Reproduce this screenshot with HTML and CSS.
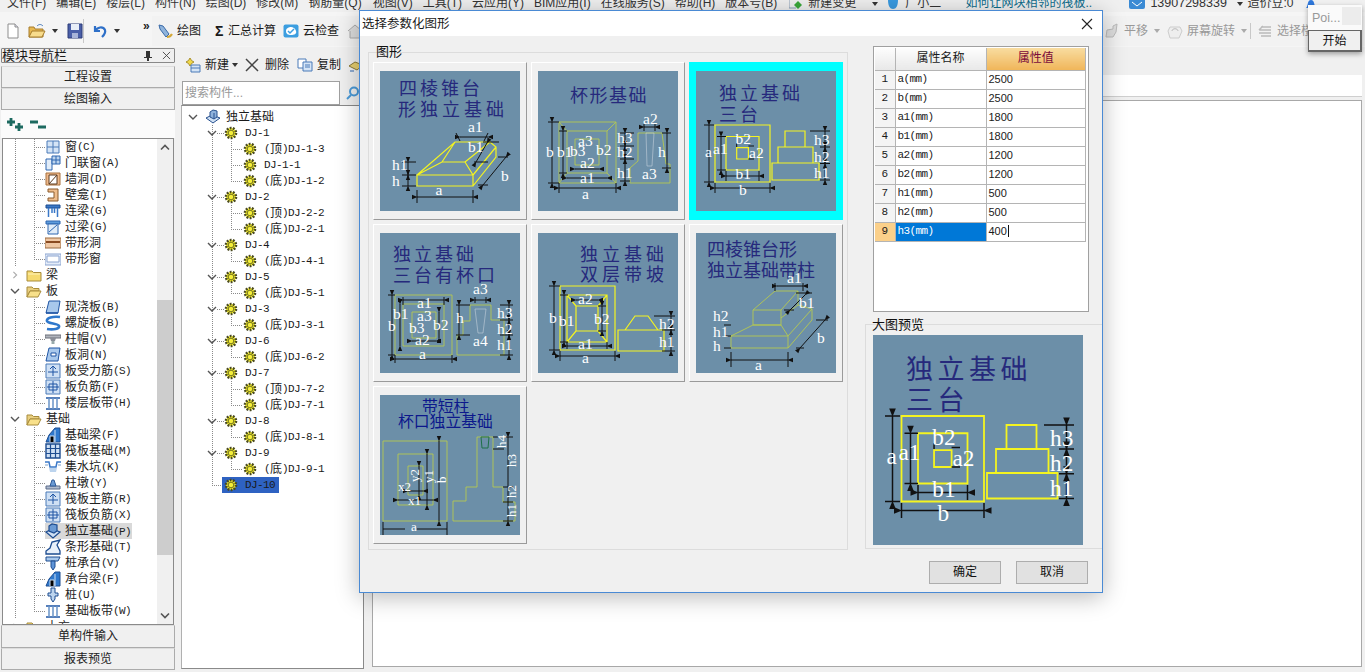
FILE: index.html
```html
<!DOCTYPE html>
<html lang="zh">
<head>
<meta charset="utf-8">
<title>选择参数化图形</title>
<link rel="stylesheet" href="styles.css">
</head>
<body>
<svg class="defs" aria-hidden="true">
  <defs>
    <marker id="ar" viewBox="0 0 6 6" refX="0.5" refY="3" markerWidth="6" markerHeight="6" markerUnits="userSpaceOnUse" orient="auto-start-reverse"><path d="M0 3L5.500 .8V5.200Z" fill="#111"/></marker>
    <symbol id="chev" viewBox="0 0 10 8"><path d="M1 2l4 4 4-4" fill="none" stroke="#555" stroke-width="1.400"/></symbol>
    <symbol id="chevr" viewBox="0 0 10 10"><path d="M3 1l4 4-4 4" fill="none" stroke="#aaa" stroke-width="1.400"/></symbol>
    <symbol id="gem" viewBox="0 0 14 14"><circle cx="7" cy="7" r="5" fill="#f2ec2a" stroke="#4a4a20" stroke-width="2.600" stroke-dasharray="1.800 1.300"/><circle cx="7" cy="7" r="2.800" fill="#f4ee3a" stroke="#55551c" stroke-width=".8"/></symbol>
    <symbol id="fold" viewBox="0 0 16 14"><path d="M1 3h5l1.500 1.500H15V13H1Z" fill="#f6da70" stroke="#a88c3c"/><path d="M2 6h12" stroke="#fff3bc"/></symbol>
    <symbol id="foldo" viewBox="0 0 16 14"><path d="M1 3h5l1.500 1.500H13V7H4L1 13Z" fill="#e9cf80" stroke="#a88c3c"/><path d="M4 7h11l-3 6H1Z" fill="#f8e08a" stroke="#a88c3c"/></symbol>
    <symbol id="found" viewBox="0 0 16 16"><path d="M1 9l6-3 8 3-7 5Z" fill="#cfe0f4" stroke="#28518f"/><path d="M5 3l3-2 4 1v6l-3 2-4-2Z" fill="#8fb2dc" stroke="#28518f"/><path d="M9 4v6" stroke="#28518f"/></symbol>
    <symbol id="i-win" viewBox="0 0 16 16"><path d="M2 2h12v12H2Z" fill="#d4e4f6" stroke="#4a7ab8"/><path d="M8 2v12M2 8h12" stroke="#4a7ab8"/></symbol>
    <symbol id="i-dw" viewBox="0 0 16 16"><path d="M1 4h6v11H1Z" fill="#e2edf9" stroke="#2f66b0"/><path d="M7 1h8v8H7Z" fill="#bcd4ee" stroke="#2f66b0"/><path d="M11 1v8M7 5h8" stroke="#2f66b0"/></symbol>
    <symbol id="i-hole" viewBox="0 0 16 16"><path d="M1 2h14v12H1Z" fill="#eeb98c" stroke="#a8703c"/><path d="M4 4h8v9H4Z" fill="#fff" stroke="#5a3a20"/><path d="M4 13l8-9" stroke="#5a3a20"/></symbol>
    <symbol id="i-nic" viewBox="0 0 16 16"><path d="M3 2h10v12H3V11h6V5H3Z" fill="#eebd8e" stroke="#8a5a2c"/></symbol>
    <symbol id="i-lb" viewBox="0 0 16 16"><path d="M1 2h14v3H1Z" fill="#3a78c8" stroke="#1d4c90"/><path d="M3.500 5v9M7 5v5M9.500 5v5M12.500 5v9" stroke="#3a78c8" stroke-width="1.500"/></symbol>
    <symbol id="i-gl" viewBox="0 0 16 16"><path d="M1 2h14v3H1Z" fill="#5e9cdc" stroke="#2f66b0"/><path d="M3 5h10v10H3Z" fill="#e0ecf8" stroke="#2f66b0"/><path d="M4 13l8-7" stroke="#2f66b0"/></symbol>
    <symbol id="i-bh" viewBox="0 0 16 16"><path d="M0 3h16v10H0Z" fill="#f0c8a4" stroke="#9a6a40"/><path d="M1 7h14" stroke="#8a4a20" stroke-width="2"/></symbol>
    <symbol id="i-bw" viewBox="0 0 16 16"><path d="M0 3h16v11H0Z" fill="#e4ecf8" stroke="#8ba4d0"/><path d="M2 5h12v6H2Z" fill="#fff" stroke="#8ba4d0"/></symbol>
    <symbol id="i-sl" viewBox="0 0 16 16"><path d="M4 2h11l-2 12H1Z" fill="#a8c8ec" stroke="#1f55a4"/><path d="M1 14h12" stroke="#1f55a4" stroke-width="1.500"/></symbol>
    <symbol id="i-sp" viewBox="0 0 16 16"><path d="M15 2C8 1 1 3 2 6s11 2 12 5-6 4-12 3" fill="none" stroke="#2f78cc" stroke-width="2.600"/></symbol>
    <symbol id="i-cap" viewBox="0 0 16 16"><path d="M0 4h16v3H0Z" fill="#b0b4bc" stroke="#6a6e78"/><path d="M5 7h6l-1 3H6Z" fill="#8a8e98"/><path d="M6.500 10h3v3h-3Z" fill="#9aa"/></symbol>
    <symbol id="i-sh" viewBox="0 0 16 16"><path d="M4 1h11l-2 13H1Z" fill="#a8c8ec" stroke="#1f55a4"/><path d="M6 6h5v3H6Z" fill="#fff" stroke="#1f55a4"/></symbol>
    <symbol id="i-rb" viewBox="0 0 16 16"><path d="M1 1h14v14H1Z" fill="#cfe0f4" stroke="#4a7ab8"/><path d="M8 3v10M3 9h10" stroke="#1f55a4"/><path d="M5 6l3-3 3 3" fill="none" stroke="#1f55a4"/></symbol>
    <symbol id="i-rn" viewBox="0 0 16 16"><path d="M1 1h14v14H1Z" fill="#cfe0f4" stroke="#4a7ab8"/><path d="M4 5h8v6H4ZM8 2v12M2 8h12" fill="none" stroke="#1f55a4"/></symbol>
    <symbol id="i-bd" viewBox="0 0 16 16"><path d="M1 3h14M1 14h14" stroke="#1f55a4" stroke-width="1.300"/><path d="M4 3v11M8 3v11M12 3v11" stroke="#6a94c8" stroke-width="1.500"/></symbol>
    <symbol id="i-fb" viewBox="0 0 16 16"><path d="M1 15l3-7 6-7h5v14Z" fill="#2f78cc" stroke="#1c4c90"/><path d="M5 15V9h4v6M10 3v12" stroke="#cfe0f4"/></symbol>
    <symbol id="i-raft" viewBox="0 0 16 16"><path d="M1 1h14v14H1Z" fill="#cfe0f4" stroke="#1d4c90" stroke-width="1.400"/><path d="M5.500 1v14M10.500 1v14M1 5.500h14M1 10.500h14" stroke="#1d4c90" stroke-width="1.200"/></symbol>
    <symbol id="i-pit" viewBox="0 0 16 16"><path d="M0 3h4l1 5h6l1-5h4" fill="none" stroke="#3a78c8" stroke-width="1.500"/><path d="M4 9h8l-1 4H5Z" fill="#bcd4ee"/><path d="M0 6h3M13 6h3" stroke="#7aa0cc"/></symbol>
    <symbol id="i-dun" viewBox="0 0 16 16"><path d="M1 11h14v3H1Z" fill="#b0bcd0" stroke="#5a6a88"/><path d="M5 11l2-6h2l2 6Z" fill="#6a9ad4" stroke="#2f5a98"/></symbol>
    <symbol id="i-zj" viewBox="0 0 16 16"><path d="M1 9l6-3 8 3-7 6Z" fill="#cfe0f4" stroke="#1d4c90" stroke-width="1.200"/><path d="M4 3l3-2 5 1v6l-3 2-5-2Z" fill="#6a9ad4" stroke="#1d4c90" stroke-width="1.200"/></symbol>
    <symbol id="i-tj" viewBox="0 0 16 16"><path d="M1 15v-3l4-3 2-6 8-2-3 5 3 6v3Z" fill="#e8f0fa" stroke="#1d4c90" stroke-width="1.300"/></symbol>
    <symbol id="i-ct" viewBox="0 0 16 16"><path d="M1 2h14l-2 4H1Z" fill="#a8c8ec" stroke="#1d4c90"/><path d="M6 6h4v6l-2 3-2-3Z" fill="#5e94d8" stroke="#1d4c90"/></symbol>
    <symbol id="i-pile" viewBox="0 0 16 16"><path d="M6 1h4v5h3v3h-3v3l-2 3-2-3V9H3V6h3Z" fill="#bcd4ee" stroke="#1d4c90"/></symbol>
    <symbol id="i-n" viewBox="0 0 16 16"><path d="M3 1h7l3 3v11H3Z" fill="#fff" stroke="#8d8d8d"/><path d="M10 1v3h3" fill="#dde" stroke="#8d8d8d"/></symbol>
  </defs>
</svg>

<div class="app">
  <div class="menubar">
    <span class="mi mi-a">文件(F)</span><span class="mi">编辑(E)</span><span class="mi">楼层(L)</span><span class="mi">构件(N)</span><span class="mi">绘图(D)</span><span class="mi">修改(M)</span><span class="mi">钢筋量(Q)</span><span class="mi mi-b">视图(V)</span><span class="mi">工具(T)</span><span class="mi">云应用(Y)</span><span class="mi mi-e">BIM应用(I)</span><span class="mi">在线服务(S)</span><span class="mi">帮助(H)</span><span class="mi">版本号(B)</span>
    <svg class="mi-ic mi-ic-new" viewBox="0 0 14 10"><path d="M0 0v8h7" fill="none" stroke="#8aa0b8"/><path d="M9 1l4 4-4 4-4-4Z" fill="#3aa83a"/></svg>
    <span class="mi mi-c">新建变更</span><span class="caret caret-top"></span>
    <svg class="mi-ic mi-ic-xe" viewBox="0 0 12 10"><path d="M1 0c0 6 2 9 5 9s5-3 5-9Z" fill="#3a9ae0"/></svg>
    <span class="mi mi-d">广小二</span><span class="mi mi-link">如何让网块相邻的筏板..</span>
    <svg class="mi-ic mi-ic-mail" viewBox="0 0 16 10"><rect x="0" y="-4" width="16" height="13" rx="2" fill="#3a8ad4"/><path d="M3 2l5 4 5-4" fill="none" stroke="#fff"/></svg>
    <span class="mi mi-phone">13907298339</span><span class="caret caret-top caret-ph"></span><span class="mi mi-bean">造价豆:0</span>
    <svg class="bell" viewBox="0 0 14 10"><path d="M2 8c2-1 1-8 5-8s3 7 5 8Z" fill="#2f78dc"/></svg>
  </div>

  <div class="toolbar">
    <div class="tb-left">
      <svg class="tb-i" viewBox="0 0 16 16"><use href="#i-n"/></svg>
      <svg class="tb-i tb-open" viewBox="0 0 18 16"><path d="M1 4h5l1 2h8v8H1Z" fill="#e8b850" stroke="#a67c2c"/><path d="M4 8h13l-3 6H1Z" fill="#f8dc8c" stroke="#a67c2c"/><path d="M9 3c2-2 4-2 6 0" fill="none" stroke="#4a7ab8"/></svg>
      <span class="caret"></span>
      <svg class="tb-i tb-save" viewBox="0 0 16 16"><path d="M1 1h14v14H1Z" fill="#4a5fa8" stroke="#2c3c78"/><path d="M4 1h8v6H4Z" fill="#e8eef8"/><path d="M5 10h6v5H5Z" fill="#a8b4d8"/></svg>
      <span class="tb-sep"></span>
      <svg class="tb-i tb-undo" viewBox="0 0 16 16"><path d="M3 3v5h5M3.500 8C5 4 11 3 13 7c1 3-1 5-3 7" fill="none" stroke="#2f70c8" stroke-width="2.200"/></svg>
      <span class="caret"></span>
      <span class="more">»</span>
    </div>
    <div class="tb-main">
      <svg class="tb-i" viewBox="0 0 16 16"><path d="M2 2l4 1 6 8-3 3-6-8Z" fill="#8fb4dc" stroke="#3a6aa8"/><path d="M10 14c2 0 4-1 5-3" fill="none" stroke="#d4a838" stroke-width="2"/></svg>
      <span class="tb-t">绘图</span>
      <span class="sigma">Σ</span>
      <span class="tb-t">汇总计算</span>
      <svg class="tb-i tb-cloud" viewBox="0 0 16 16"><rect x=".5" y="1.500" width="15" height="13" rx="2" fill="#3c9ee0"/><path d="M3 8c0-3 3-4 5-4s4 1 5 4-2 4-5 4-5-1-5-4Z" fill="#fff"/><path d="M5 8l2 2 4-4" fill="none" stroke="#3c9ee0" stroke-width="1.500"/></svg>
      <span class="tb-t">云检查</span>
      <svg class="tb-i tb-home" viewBox="0 0 16 16"><path d="M1 8l7-6 7 6M3 8v7h10V8" fill="#ddd" stroke="#aaa"/></svg>
      <div class="tb-right">
        <svg class="tb-i" viewBox="0 0 16 16"><path d="M2 14l1-7 6-1V3l4-2-1 8-3 5Z" fill="#ddd" stroke="#bbb"/></svg>
        <span class="tb-g tb-pan">平移</span><span class="caret caret-g caret-pan"></span>
        <svg class="tb-i tb-rot" viewBox="0 0 16 16"><path d="M3 4h10l2 4-3 7H3L1 8Z" fill="#eee" stroke="#ccc"/><path d="M5 8c0-3 6-3 6 0" fill="none" stroke="#bbb"/></svg>
        <span class="tb-g">屏幕旋转</span><span class="caret caret-g"></span>
        <span class="tb-sep tb-sep-g"></span>
        <svg class="tb-i" viewBox="0 0 16 16"><path d="M2 7h12M4 4h10M2 10h12M4 13h10M2 7l4-4" fill="none" stroke="#bbb" stroke-width="1.500"/></svg>
        <span class="tb-g">选择楼层</span>
      </div>
    </div>
  </div>

  <div class="main">
    <aside class="nav">
      <div class="nav-title"><span>模块导航栏</span><svg class="pin" viewBox="0 0 10 12"><path d="M3 1h4v6h2v1H6v3H4V8H1V7h2Z" fill="#333"/></svg><svg class="nav-x" viewBox="0 0 10 10"><path d="M1 1l8 8M9 1l-8 8" stroke="#444"/></svg></div>
      <div class="nav-btn nav-btn-first">工程设置</div>
      <div class="nav-btn">绘图输入</div>
      <div class="nav-tools">
        <svg class="nt" viewBox="0 0 16 14"><path d="M4 0v8M0 4h8M12 5v8M8 9h8" stroke="#1d6a60" stroke-width="2.800"/></svg>
        <svg class="nt" viewBox="0 0 16 14"><path d="M0 4h8M8 9h8" stroke="#1d6a60" stroke-width="2.800"/></svg>
      </div>
      <div class="nav-list">
        <div class="rows">
          <div class="nr c"><svg class="ni"><use href="#i-win"/></svg>窗<span class="m">(C)</span></div>
          <div class="nr c"><svg class="ni"><use href="#i-dw"/></svg>门联窗<span class="m">(A)</span></div>
          <div class="nr c"><svg class="ni"><use href="#i-hole"/></svg>墙洞<span class="m">(D)</span></div>
          <div class="nr c"><svg class="ni"><use href="#i-nic"/></svg>壁龛<span class="m">(I)</span></div>
          <div class="nr c"><svg class="ni"><use href="#i-lb"/></svg>连梁<span class="m">(G)</span></div>
          <div class="nr c"><svg class="ni"><use href="#i-gl"/></svg>过梁<span class="m">(G)</span></div>
          <div class="nr c"><svg class="ni"><use href="#i-bh"/></svg>带形洞</div>
          <div class="nr c last"><svg class="ni"><use href="#i-bw"/></svg>带形窗</div>
          <div class="nr s"><svg class="exp"><use href="#chevr"/></svg><svg class="fo"><use href="#fold"/></svg>梁</div>
          <div class="nr s"><svg class="exp"><use href="#chev"/></svg><svg class="fo"><use href="#foldo"/></svg>板</div>
          <div class="nr c"><svg class="ni"><use href="#i-sl"/></svg>现浇板<span class="m">(B)</span></div>
          <div class="nr c"><svg class="ni"><use href="#i-sp"/></svg>螺旋板<span class="m">(B)</span></div>
          <div class="nr c"><svg class="ni"><use href="#i-cap"/></svg>柱帽<span class="m">(V)</span></div>
          <div class="nr c"><svg class="ni"><use href="#i-sh"/></svg>板洞<span class="m">(N)</span></div>
          <div class="nr c"><svg class="ni"><use href="#i-rb"/></svg>板受力筋<span class="m">(S)</span></div>
          <div class="nr c"><svg class="ni"><use href="#i-rn"/></svg>板负筋<span class="m">(F)</span></div>
          <div class="nr c last"><svg class="ni"><use href="#i-bd"/></svg>楼层板带<span class="m">(H)</span></div>
          <div class="nr s"><svg class="exp"><use href="#chev"/></svg><svg class="fo"><use href="#foldo"/></svg>基础</div>
          <div class="nr c"><svg class="ni"><use href="#i-fb"/></svg>基础梁<span class="m">(F)</span></div>
          <div class="nr c"><svg class="ni"><use href="#i-raft"/></svg>筏板基础<span class="m">(M)</span></div>
          <div class="nr c"><svg class="ni"><use href="#i-pit"/></svg>集水坑<span class="m">(K)</span></div>
          <div class="nr c"><svg class="ni"><use href="#i-dun"/></svg>柱墩<span class="m">(Y)</span></div>
          <div class="nr c"><svg class="ni"><use href="#i-rb"/></svg>筏板主筋<span class="m">(R)</span></div>
          <div class="nr c"><svg class="ni"><use href="#i-rn"/></svg>筏板负筋<span class="m">(X)</span></div>
          <div class="nr c on"><svg class="ni"><use href="#i-zj"/></svg><span class="on-t">独立基础<span class="m">(P)</span></span></div>
          <div class="nr c"><svg class="ni"><use href="#i-tj"/></svg>条形基础<span class="m">(T)</span></div>
          <div class="nr c"><svg class="ni"><use href="#i-ct"/></svg>桩承台<span class="m">(V)</span></div>
          <div class="nr c"><svg class="ni"><use href="#i-fb"/></svg>承台梁<span class="m">(F)</span></div>
          <div class="nr c"><svg class="ni"><use href="#i-pile"/></svg>桩<span class="m">(U)</span></div>
          <div class="nr c last"><svg class="ni"><use href="#i-bd"/></svg>基础板带<span class="m">(W)</span></div>
          <div class="nr s"><svg class="exp"><use href="#chevr"/></svg><svg class="fo"><use href="#fold"/></svg>土方</div>
        </div>
        <div class="sb">
          <svg class="sb-a" viewBox="0 0 10 8"><path d="M1 6l4-4 4 4" fill="none" stroke="#555" stroke-width="1.600"/></svg>
          <div class="sb-track"><div class="sb-thumb"></div></div>
          <svg class="sb-a" viewBox="0 0 10 8"><path d="M1 2l4 4 4-4" fill="none" stroke="#555" stroke-width="1.600"/></svg>
        </div>
      </div>
      <div class="nav-btn nav-btn-b">单构件输入</div>
      <div class="nav-btn">报表预览</div>
    </aside>

    <section class="comp">
      <div class="comp-tb">
        <svg class="ct-i" viewBox="0 0 16 16"><path d="M5 1l1.500 2.500L9 5 6.500 6.500 5 9 3.500 6.500 1 5l2.500-1.500Z" fill="#f0d848" stroke="#a89030"/><path d="M6 8h9v7H6Z" fill="#d4e4f6" stroke="#4a7ab8"/><path d="M6 11h9" stroke="#4a7ab8"/></svg>
        <span class="ct-t">新建</span><span class="caret caret-new"></span>
        <svg class="ct-x" viewBox="0 0 14 14"><path d="M1 1l12 12M13 1L1 13" stroke="#444" stroke-width="1.500"/></svg>
        <span class="ct-t">删除</span>
        <svg class="ct-i ct-copy" viewBox="0 0 16 16"><path d="M1 2h8v9H1Z" fill="#fff" stroke="#4a7ab8"/><path d="M6 5h9v9H6Z" fill="#d4e4f6" stroke="#4a7ab8"/><path d="M8 8h5M8 10h5" stroke="#4a7ab8"/></svg>
        <span class="ct-t">复制</span>
        <svg class="ct-i ct-last" viewBox="0 0 16 16"><path d="M1 9l6-4 8 3-6 5Z" fill="#e8d070" stroke="#8a7a3a"/><path d="M2 14h4" stroke="#2f66b0"/></svg>
      </div>
      <div class="search">
        <div class="search-in">搜索构件...</div>
        <svg class="search-i" viewBox="0 0 14 14"><circle cx="8" cy="5.500" r="4" fill="none" stroke="#4a9ad8" stroke-width="2"/><path d="M5 9l-4 4" stroke="#4a9ad8" stroke-width="2"/></svg>
      </div>
      <div class="tree">
        <div class="tr l0"><svg class="exp"><use href="#chev"/></svg><svg class="troot"><use href="#found"/></svg>独立基础</div>
        <div class="tr l1"><svg class="exp"><use href="#chev"/></svg><svg class="g"><use href="#gem"/></svg><span class="m">DJ-1</span></div>
        <div class="tr l2"><svg class="g"><use href="#gem"/></svg><span class="m">(</span>顶<span class="m">)DJ-1-3</span></div>
        <div class="tr l2"><svg class="g"><use href="#gem"/></svg><span class="m">DJ-1-1</span></div>
        <div class="tr l2 e"><svg class="g"><use href="#gem"/></svg><span class="m">(</span>底<span class="m">)DJ-1-2</span></div>
        <div class="tr l1"><svg class="exp"><use href="#chev"/></svg><svg class="g"><use href="#gem"/></svg><span class="m">DJ-2</span></div>
        <div class="tr l2"><svg class="g"><use href="#gem"/></svg><span class="m">(</span>顶<span class="m">)DJ-2-2</span></div>
        <div class="tr l2 e"><svg class="g"><use href="#gem"/></svg><span class="m">(</span>底<span class="m">)DJ-2-1</span></div>
        <div class="tr l1"><svg class="exp"><use href="#chev"/></svg><svg class="g"><use href="#gem"/></svg><span class="m">DJ-4</span></div>
        <div class="tr l2 e"><svg class="g"><use href="#gem"/></svg><span class="m">(</span>底<span class="m">)DJ-4-1</span></div>
        <div class="tr l1"><svg class="exp"><use href="#chev"/></svg><svg class="g"><use href="#gem"/></svg><span class="m">DJ-5</span></div>
        <div class="tr l2 e"><svg class="g"><use href="#gem"/></svg><span class="m">(</span>底<span class="m">)DJ-5-1</span></div>
        <div class="tr l1"><svg class="exp"><use href="#chev"/></svg><svg class="g"><use href="#gem"/></svg><span class="m">DJ-3</span></div>
        <div class="tr l2 e"><svg class="g"><use href="#gem"/></svg><span class="m">(</span>底<span class="m">)DJ-3-1</span></div>
        <div class="tr l1"><svg class="exp"><use href="#chev"/></svg><svg class="g"><use href="#gem"/></svg><span class="m">DJ-6</span></div>
        <div class="tr l2 e"><svg class="g"><use href="#gem"/></svg><span class="m">(</span>底<span class="m">)DJ-6-2</span></div>
        <div class="tr l1"><svg class="exp"><use href="#chev"/></svg><svg class="g"><use href="#gem"/></svg><span class="m">DJ-7</span></div>
        <div class="tr l2"><svg class="g"><use href="#gem"/></svg><span class="m">(</span>顶<span class="m">)DJ-7-2</span></div>
        <div class="tr l2 e"><svg class="g"><use href="#gem"/></svg><span class="m">(</span>底<span class="m">)DJ-7-1</span></div>
        <div class="tr l1"><svg class="exp"><use href="#chev"/></svg><svg class="g"><use href="#gem"/></svg><span class="m">DJ-8</span></div>
        <div class="tr l2 e"><svg class="g"><use href="#gem"/></svg><span class="m">(</span>底<span class="m">)DJ-8-1</span></div>
        <div class="tr l1"><svg class="exp"><use href="#chev"/></svg><svg class="g"><use href="#gem"/></svg><span class="m">DJ-9</span></div>
        <div class="tr l2 e"><svg class="g"><use href="#gem"/></svg><span class="m">(</span>底<span class="m">)DJ-9-1</span></div>
        <div class="tr l1 end"><span class="sel"><svg class="g"><use href="#gem"/></svg><span class="m">DJ-10</span></span></div>
      </div>
    </section>

    <section class="work">
      <div class="work-strip"></div>
      <div class="work-tabs"></div>
      <div class="canvas"></div>
    </section>
  </div>
</div>

<div class="dialog">
  <div class="d-title"><span>选择参数化图形</span><svg class="d-x" viewBox="0 0 12 12"><path d="M1 1l10 10M11 1L1 11" stroke="#222" stroke-width="1.100"/></svg></div>
  <div class="d-body">
    <div class="group">
      <div class="g-label">图形</div>
      <div class="cards">
        <div class="card">
          <svg class="th" viewBox="0 0 140 140">
            <text class="t" x="19" y="24" letter-spacing="3">四棱锥台</text><text class="t" x="18" y="45" letter-spacing="4">形独立基础</text>
            <path class="y" d="M37 104H93V115H37ZM37 104L75 71H110L116 76V86L93 115M37 104L62 91H85L93 104M62 91L75 71M85 91L110 71M93 104L116 76"/>
            <g class="d"><path d="M37 126H93"/><path d="M28 91V104"/><path d="M28 104V115"/><path d="M80 66H108"/><path d="M107 72L96 91"/><path d="M126 86L103 114"/></g>
            <path class="k" d="M37 119V132M93 119V132M22 91H36M22 104H36M22 115H36M76 62L80 70M108 62L104 70M103 71H119M94 91H108M118 86H128M98 114H108"/>
            <text class="w" x="59" y="124" text-anchor="middle">a</text><text class="w" x="12" y="99">h1</text><text class="w" x="12" y="115">h</text><text class="w" x="88" y="61">a1</text><text class="w" x="88" y="81">b1</text><text class="w" x="121" y="110">b</text>
          </svg>
        </div>
        <div class="card">
          <svg class="th" viewBox="0 0 140 140">
            <text class="t" x="32" y="31" letter-spacing="1.500">杯形基础</text>
            <path class="p" d="M21 51H78V112H21ZM29 60H69V102H29ZM37 68H61V94H37ZM21 51L29 60M78 51L69 60M21 112L29 102M78 112L69 102M100 62H124L128 93H132V112H92V97L100 90Z"/>
            <path class="p2" d="M108 62H116L114 95H109Z"/>
            <g class="d"><path d="M14 51V112"/><path d="M25 60V102"/><path d="M21 117H78"/><path d="M29 107H69"/><path d="M37 98H61"/><path d="M87 62V75"/><path d="M87 75V88"/><path d="M87 88V110"/><path d="M129 62V97"/><path d="M106 56H117"/></g>
            <path class="k" d="M10 51H21M10 112H21M21 60H29M21 102H29M21 112V122M78 112V122M82 62H96M82 75H96M82 88H96M82 110H92M124 62H133M124 97H133M106 53V60M117 53V60"/>
            <text class="w" x="105" y="53">a2</text><text class="w" x="79" y="72">h3</text><text class="w" x="79" y="86">h2</text><text class="w" x="79" y="107">h1</text><text class="w" x="120" y="86">h</text><text class="w" x="104" y="108">a3</text><text class="w" x="44" y="128">a</text><text class="w" x="42" y="112">a1</text><text class="w" x="42" y="97">a2</text><text class="w" x="40" y="75">a3</text><text class="w" x="8" y="86">b</text><text class="w" x="19" y="86">b1</text><text class="w" x="32" y="85">b3</text><text class="w" x="58" y="84">b2</text>
          </svg>
        </div>
        <div class="card card-on">
          <svg class="th" viewBox="0 0 140 140">
            <text class="t" x="23" y="29" letter-spacing="3">独立基础</text><text class="t" x="23" y="50" letter-spacing="3">三台</text>
            <path class="y" d="M19 54H74V111H19ZM30 65.500H63V99H30ZM40.700 76.700H52.400V88H40.700ZM89 60H109V76H89ZM82 76H117V92H82ZM76 92H123V109H76Z"/>
            <g class="d"><path d="M13 54V111"/><path d="M25 65.500V99"/><path d="M19 117H74"/><path d="M30 105H63"/><path d="M129 60V76"/><path d="M129 76V92.500"/><path d="M129 92.500V109"/></g>
            <path class="k" d="M8 54H18M8 111H18M21 65.500H30M21 99H30M19 112V122M74 112V122M30 100V110M63 100V110M114 60H134M124 76H134M124 92.500H134M124 109H134M40.700 72V76M52.400 75H58M52.400 88H58"/>
            <text class="w" x="9" y="86">a</text><text class="w" x="17" y="83">a1</text><text class="w" x="39.500" y="73">b2</text><text class="w" x="53" y="87">a2</text><text class="w" x="39.500" y="108">b1</text><text class="w" x="43" y="124">b</text><text class="w" x="118" y="74">h3</text><text class="w" x="118" y="90.500">h2</text><text class="w" x="118" y="107">h1</text>
          </svg>
        </div>
        <div class="card">
          <svg class="th" viewBox="0 0 140 140">
            <text class="t" x="13" y="28" letter-spacing="3">独立基础</text><text class="t" x="13" y="49" letter-spacing="3">三台有杯口</text>
            <path class="p" d="M15 62H72V122H15ZM23 71H64V113H23ZM32 79H56V105H32ZM90 72H111V87H124V122H77V102H83V88H90Z"/>
            <path class="p2" d="M95 76H106L103 100H98Z"/>
            <g class="d"><path d="M12 62V122"/><path d="M20 71V113"/><path d="M59 79V105"/><path d="M23 67H64"/><path d="M32 108H56"/><path d="M15 126H72"/><path d="M95 67H106"/><path d="M79 72V102"/><path d="M129 72V87"/><path d="M129 87V102"/><path d="M129 102V122"/></g>
            <path class="k" d="M8 62H15M8 122H15M23 64V72M64 64V72M15 122V130M72 122V130M95 64V70M106 64V70M76 72H90M76 102H90M120 72H133M120 87H133M120 102H133M120 122H133"/>
            <text class="w" x="93" y="61">a3</text><text class="w" x="37" y="75">a1</text><text class="w" x="13" y="86">b1</text><text class="w" x="37" y="88">a3</text><text class="w" x="76" y="90">h</text><text class="w" x="117" y="85">h3</text><text class="w" x="117" y="101">h2</text><text class="w" x="117" y="117">h1</text><text class="w" x="53" y="97">b2</text><text class="w" x="29" y="100">b3</text><text class="w" x="8" y="98">b</text><text class="w" x="35" y="112">a2</text><text class="w" x="93" y="113">a4</text><text class="w" x="39" y="126">a</text>
          </svg>
        </div>
        <div class="card">
          <svg class="th" viewBox="0 0 140 140">
            <text class="t" x="42" y="28" letter-spacing="4">独立基础</text><text class="t" x="42" y="48" letter-spacing="4">双层带坡</text>
            <path class="y" d="M22 53H77V117H22ZM29 62H69V109H29ZM38 73H60V98H38ZM29 62L38 73M69 62L60 73M29 109L38 98M69 109L60 98M80 97H126V118H80ZM87 97L97 83H110L120 97"/>
            <g class="d"><path d="M16 53V117"/><path d="M26 62V109"/><path d="M64 73V98"/><path d="M38 67H60"/><path d="M29 113H69"/><path d="M22 123H77"/><path d="M133 83V97"/><path d="M133 97V118"/></g>
            <path class="k" d="M11 53H22M11 117H22M22 62H30M22 109H30M60 73H68M60 98H68M22 118V128M77 118V128M116 83H137M124 97H137M124 118H137M29 109V116M69 109V116"/>
            <text class="w" x="11" y="90">b</text><text class="w" x="21" y="93">b1</text><text class="w" x="40" y="71">a2</text><text class="w" x="56" y="91">b2</text><text class="w" x="40" y="116">a1</text><text class="w" x="44" y="130">a</text><text class="w" x="121" y="96">h2</text><text class="w" x="121" y="114">h1</text>
          </svg>
        </div>
        <div class="card">
          <svg class="th" viewBox="0 0 140 140">
            <text class="t" x="11" y="23">四棱锥台形</text><text class="t" x="11" y="44">独立基础带柱</text>
            <path class="p" d="M35 103H92V115H35ZM35 103L57 92H85L92 103M57 77H85V92H57ZM57 77L79 58H102L85 77M102 58V72L116 76V87L92 115M92 103L116 76M85 85L102 72"/>
            <g class="d"><path d="M35 127H92"/><path d="M81 53H107"/><path d="M109 62L94 77"/><path d="M129 87L104 115"/></g>
            <path class="k" d="M35 119V134M92 119V134M79 50V58M107 50V58M100 60H116M88 77H98M120 87H132M100 115H108M28 103H35M28 115H35M28 92H35"/>
            <text class="w" x="91" y="50">a1</text><text class="w" x="103" y="75">b1</text><text class="w" x="17" y="88">h2</text><text class="w" x="17" y="104">h1</text><text class="w" x="17" y="118">h</text><text class="w" x="121" y="110">b</text><text class="w" x="59" y="137">a</text>
          </svg>
        </div>
        <div class="card">
          <svg class="th" viewBox="0 0 140 140">
            <text class="t2" x="42" y="17">带短柱</text><text class="t2" x="18" y="32">杯口独立基础</text>
            <path class="p" d="M3 46H67V126H3ZM18 59H53V110H18ZM28 71H43V100H28ZM97 42H113V92H123V107H135V126H73V106H86V92H97Z"/>
            <path class="gc" d="M101 42H109L108 53H102Z"/>
            <g class="d"><path d="M59 46V126"/><path d="M47 59V110"/><path d="M39 71V100"/><path d="M18 105H53"/><path d="M28 96H43"/><path d="M128 42V126"/></g>
            <path class="k" d="M3 134H25M37 134H67M3 127V140M67 127V140M113 42H133M113 54H124M123 92H133M123 107H133M123 126H133"/>
            <text class="w2" x="31" y="136">a</text><text class="w2" x="28" y="110">x1</text><text class="w2" x="18" y="96">x2</text>
            <text class="w2" x="66" y="88" transform="rotate(-90 66 88)">b</text>
            <text class="w2" x="53" y="88" transform="rotate(-90 53 88)">y1</text>
            <text class="w2" x="39" y="87" transform="rotate(-90 39 87)">y2</text>
            <text class="w2" x="126" y="53" transform="rotate(-90 126 53)">h4</text>
            <text class="w2" x="136" y="72" transform="rotate(-90 136 72)">h3</text>
            <text class="w2" x="136" y="103" transform="rotate(-90 136 103)">h2</text>
            <text class="w2" x="136" y="122" transform="rotate(-90 136 122)">h1</text>
          </svg>
        </div>
      </div>
    </div>

    <div class="side">
      <div class="grid-box">
        <table class="props">
          <thead><tr><th class="c0"></th><th class="c1">属性名称</th><th class="c2 val-h">属性值</th></tr></thead>
          <tbody>
            <tr><th>1</th><td class="m-c">a(mm)</td><td class="v">2500</td></tr>
            <tr><th>2</th><td class="m-c">b(mm)</td><td class="v">2500</td></tr>
            <tr><th>3</th><td class="m-c">a1(mm)</td><td class="v">1800</td></tr>
            <tr><th>4</th><td class="m-c">b1(mm)</td><td class="v">1800</td></tr>
            <tr><th>5</th><td class="m-c">a2(mm)</td><td class="v">1200</td></tr>
            <tr><th>6</th><td class="m-c">b2(mm)</td><td class="v">1200</td></tr>
            <tr><th>7</th><td class="m-c">h1(mm)</td><td class="v">500</td></tr>
            <tr><th>8</th><td class="m-c">h2(mm)</td><td class="v">500</td></tr>
            <tr class="act"><th>9</th><td class="m-c">h3(mm)</td><td class="v"><span class="cursor">400</span></td></tr>
          </tbody>
        </table>
      </div>
      <div class="preview">
        <div class="g-label g-label-p">大图预览</div>
        <svg class="big" viewBox="0 0 140 140">
          <text class="t" x="22" y="29" letter-spacing="3">独立基础</text><text class="t" x="22" y="50" letter-spacing="3">三台</text>
          <path class="y" d="M19 54H74V111H19ZM30 65.500H63V99H30ZM40.700 76.700H52.400V88H40.700ZM89 60H109V76H89ZM82 76H117V92H82ZM76 92H123V109H76Z"/>
          <g class="d"><path d="M13 54V111"/><path d="M25 65.500V99"/><path d="M19 117H74"/><path d="M30 105H63"/><path d="M129 60V76"/><path d="M129 76V92.500"/><path d="M129 92.500V109"/></g>
          <path class="k" d="M8 54H18M8 111H18M21 65.500H30M21 99H30M19 112V122M74 112V122M30 100V110M63 100V110M114 60H134M124 76H134M124 92.500H134M124 109H134M40.700 72V76M52.400 75H58M52.400 88H58"/>
          <text class="w" x="9" y="86">a</text><text class="w" x="17" y="83">a1</text><text class="w" x="39.500" y="73">b2</text><text class="w" x="53" y="87">a2</text><text class="w" x="39.500" y="108">b1</text><text class="w" x="43" y="124">b</text><text class="w" x="118" y="74">h3</text><text class="w" x="118" y="90.500">h2</text><text class="w" x="118" y="107">h1</text>
        </svg>
      </div>
    </div>
  </div>
  <div class="d-foot"><div class="btn">确定</div><div class="btn">取消</div></div>
</div>

<div class="popup">
  <div class="pop-top"><span>Poi...</span><i class="pop-box"></i></div>
  <div class="pop-btn">开始</div>
</div>
</body>
</html>
```
FILE: styles.css
```css
* { box-sizing: border-box; }
html, body { margin: 0; padding: 0; }
body {
  width: 1365px; height: 672px; overflow: hidden; position: relative;
  background: #f0f0f0; color: #1a1a1a;
  font: 12px/16px "Liberation Sans", "Noto Sans CJK SC", sans-serif;
}
.defs { position: absolute; width: 0; height: 0; }
.m { font: 11px/16px "Liberation Mono", monospace; letter-spacing: -.6px; }

/* shell */
.app { display: flex; flex-direction: column; height: 672px; }
.menubar { height: 12px; line-height: 6px; display: flex; padding-left: 7px; gap: 10px; overflow: hidden; white-space: nowrap; flex: none; color: #333; }
.mi-b { margin-left: 1px; }
.mi-ic { height: 10px; flex: none; }
.mi-e { margin-left: 0; }
.mi-ic-new { width: 14px; margin-left: 2px; }
.mi-c { margin-left: -5px; margin-right: 0; }
.caret-top { align-self: flex-start; }
.mi-ic-xe { width: 12px; margin-left: -9px; }
.mi-d { margin-left: -4px; }
.mi-link { margin-left: 14px; color: #0d6d8c; width: 128px; }
.mi-ic-mail { width: 16px; margin-left: 26px; margin-right: -6px; }
.mi-phone { width: 77px; font-size: 12.500px; margin-left: 1px; }
.mi-bean { margin-left: -6px; }
.bell { width: 14px; height: 10px; margin-left: 1px; }

.toolbar { height: 35px; display: flex; flex: none; align-items: center; background: #f5f5f5; padding-top: 3px; }
.tb-left { display: flex; align-items: center; width: 152px; height: 30px; padding-left: 5px; flex: none; }
.tb-main { display: flex; align-items: center; flex: 1; height: 30px; padding-left: 5px; background: #f2f2f2; }
.tb-i { width: 16px; height: 16px; flex: none; }
.tb-open { width: 18px; margin-left: 7px; }
.tb-save { margin-left: 1px; }
.tb-undo { margin-left: 0; }
.tb-t { margin-left: 4px; }
.caret { width: 0; height: 0; border: 3px solid transparent; border-top: 4px solid #333; border-bottom: 0; margin: 0 8px 0 6px; flex: none; }
.caret.caret-top { margin: 2px 8px 0 6px; }
.caret.caret-ph { margin: 2px 0 0 0; }
.caret-g { border-top-color: #aaa; }
.caret-pan { margin: 0 7px 0 6px; }
.caret-new { margin: 0 7px 0 3px; }
.tb-sep { width: 1px; height: 24px; background: #c8c8c8; margin: 0 8px 0 0; }
.tb-sep-g { height: 16px; margin: 0 6px 0 -5px; }
.more { margin: -10px 0 0 15px; font-size: 12px; font-weight: bold; color: #222; }
.sigma { margin-left: 14px; font-size: 14px; font-weight: bold; width: 9px; }
.sigma + .tb-t { margin-left: 4px; }
.tb-cloud { margin-left: 7px; }
.tb-home { margin-left: 8px; }
.tb-right { display: flex; align-items: center; margin-left: 741px; white-space: nowrap; }
.tb-g { color: #999; margin-left: 4px; }
.tb-pan { margin-left: 4px; }
.tb-rot { margin-left: 0; }

.main { flex: 1; display: flex; min-height: 0; padding-bottom: 1px; align-items: stretch; }

/* module navigator */
.nav { width: 176px; flex: none; display: flex; flex-direction: column; padding: 1px 1px 1px 1px; }
.nav-title { height: 15px; border: 1px solid #888; border-radius: 1px; display: flex; align-items: center; font-size: 13px; background: #efefef; flex: none; }
.nav-title span { flex: 1; }
.pin { width: 10px; height: 12px; margin-right: 9px; }
.nav-x { width: 9px; height: 9px; margin-right: 3px; }
.nav-btn { height: 22px; flex: none; border: 1px solid #ababab; border-top-color: #ddd; background: #f0f0f0; text-align: center; line-height: 21px; color: #222; }
.nav-btn-first { margin-top: 3px; }
.nav-btn-b { height: 23px; }
.nav-tools { height: 28px; flex: none; background: #fbfbfb; display: flex; align-items: center; padding: 2px 0 0 6px; gap: 7px; }
.nt { width: 16px; height: 14px; }
.nav-list { flex: 1; min-height: 0; margin: 0 1px 0 1px; border: 1px solid #8a8a8a; background: #fff; display: flex; overflow: hidden; }
.rows { flex: 1; min-width: 0; overflow: hidden; }
.nr { height: 16px; display: flex; align-items: center; white-space: nowrap; color: #222; --d: #8a8a8a; }
.nr.c {
  padding-left: 42px;
  background:
    repeating-linear-gradient(to bottom, var(--d) 0 1px, transparent 1px 2px) 12px 0 / 1px 100% no-repeat,
    repeating-linear-gradient(to bottom, var(--d) 0 1px, transparent 1px 2px) 31px 0 / 1px 100% no-repeat,
    repeating-linear-gradient(to right, var(--d) 0 1px, transparent 1px 2px) 31px 8px / 11px 1px no-repeat;
}
.nr.c.last {
  background:
    repeating-linear-gradient(to bottom, var(--d) 0 1px, transparent 1px 2px) 12px 0 / 1px 100% no-repeat,
    repeating-linear-gradient(to bottom, var(--d) 0 1px, transparent 1px 2px) 31px 0 / 1px 8px no-repeat,
    repeating-linear-gradient(to right, var(--d) 0 1px, transparent 1px 2px) 31px 8px / 11px 1px no-repeat;
}
.nr.s { padding-left: 7px; }
.exp { width: 10px; height: 8px; flex: none; }
.fo { width: 16px; height: 14px; margin: 0 4px 0 6px; flex: none; }
.ni { width: 16px; height: 16px; margin-right: 4px; flex: none; }
.on-t { background: #d9d9d9; width: 71px; margin-left: -4px; padding-left: 4px; height: 16px; }
.nr.on .ni { background: #d9d9d9; }
.sb { width: 16px; flex: none; display: flex; flex-direction: column; background: #f0f0f0; }
.sb-a { width: 16px; height: 17px; flex: none; padding: 4px 3px; }
.sb-track { flex: 1; padding-top: 144px; }
.sb-thumb { height: 255px; background: #cdcdcd; }

/* component tree */
.comp { width: 183px; flex: none; margin: 2px 0 2px 5px; display: flex; flex-direction: column; }
.comp-tb { height: 31px; flex: none; display: flex; align-items: center; padding-left: 4px; overflow: hidden; white-space: nowrap; }
.ct-i { width: 16px; height: 16px; flex: none; }
.ct-t { margin-left: 4px; }
.ct-x { width: 14px; height: 14px; flex: none; margin: 0 2px 0 0; }
.ct-copy { margin-left: 8px; }
.ct-last { margin-left: 7px; }
.search { height: 25px; flex: none; display: flex; align-items: center; }
.search-in { width: 158px; margin-left: 1px; height: 24px; border: 1px solid #a0a0a0; background: #fff; color: #999; padding-left: 2px; line-height: 22px; }
.search-i { width: 14px; height: 14px; margin-left: 6px; }
.tree { flex: 1; min-height: 0; border: 1px solid #8a8a8a; border-left-color: #b0b0b0; background: #fff; padding-top: 3px; overflow: hidden; }
.tr { height: 16px; display: flex; align-items: center; white-space: nowrap; --d: #8a8a8a; }
.tr .m { line-height: 16px; }
.l0 { padding-left: 6px; }
.troot { width: 16px; height: 16px; margin: 0 5px 0 7px; flex: none; }
.g { width: 14px; height: 14px; flex: none; margin-right: 7px; }
.l1 .exp { margin-right: 7px; }
.l1 {
  padding-left: 25px;
  background:
    repeating-linear-gradient(to bottom, var(--d) 0 1px, transparent 1px 2px) 30px 0 / 1px 100% no-repeat,
    repeating-linear-gradient(to right, var(--d) 0 1px, transparent 1px 2px) 35px 8px / 7px 1px no-repeat;
}
.l2 {
  padding-left: 61px;
  background:
    repeating-linear-gradient(to bottom, var(--d) 0 1px, transparent 1px 2px) 30px 0 / 1px 100% no-repeat,
    repeating-linear-gradient(to bottom, var(--d) 0 1px, transparent 1px 2px) 49px 0 / 1px 100% no-repeat,
    repeating-linear-gradient(to right, var(--d) 0 1px, transparent 1px 2px) 49px 8px / 12px 1px no-repeat;
}
.l2.e {
  background:
    repeating-linear-gradient(to bottom, var(--d) 0 1px, transparent 1px 2px) 30px 0 / 1px 100% no-repeat,
    repeating-linear-gradient(to bottom, var(--d) 0 1px, transparent 1px 2px) 49px 0 / 1px 8px no-repeat,
    repeating-linear-gradient(to right, var(--d) 0 1px, transparent 1px 2px) 49px 8px / 12px 1px no-repeat;
}
.l1.end {
  padding-left: 40px;
  background:
    repeating-linear-gradient(to bottom, var(--d) 0 1px, transparent 1px 2px) 30px 0 / 1px 8px no-repeat,
    repeating-linear-gradient(to right, var(--d) 0 1px, transparent 1px 2px) 30px 8px / 10px 1px no-repeat;
}
.sel { background: #2e62c2; width: 57px; height: 16px; display: flex; align-items: center; padding-left: 2px; }

/* work area */
.work { flex: 1; display: flex; flex-direction: column; margin-left: 8px; margin-right: 3px; min-width: 0; }
.work-strip { height: 28px; flex: none; }
.work-tabs { height: 22px; flex: none; background: #fff; border-bottom: 1px solid #cfcfcf; }
.canvas { flex: 1; margin-top: 3px; margin-bottom: 4px; background: #fff; border: 1px solid #a8a8a8; }

/* dialog */
.dialog {
  position: absolute; left: 359px; top: 10px; width: 744px; height: 583px;
  background: #f0f0f0; border: 1px solid #4a8ad4;
  box-shadow: 0 4px 22px rgba(0,0,0,.28);
  display: flex; flex-direction: column;
}
.d-title { height: 25px; background: #fff; flex: none; display: flex; align-items: center; justify-content: space-between; padding: 0 9px 0 2px; font-size: 12.500px; }
.d-x { width: 12px; height: 12px; margin-top: 0; }
.d-body { display: flex; padding: 16px 0 0 8px; flex: none; }
.group { width: 480px; height: 498px; border: 1px solid #dcdcdc; padding: 0 0 0 4px; flex: none; }
.g-label { height: 14px; line-height: 14px; margin: -8px 0 3px 3px; font-size: 13px; color: #111; width: fit-content; }
.cards { display: grid; grid-template-columns: repeat(3, 154px); grid-auto-rows: 158px; gap: 4px; }
.card { background: #f0f0f0; border: 1px solid; border-color: #fff #9a9a9a #9a9a9a #fff; padding: 8px 0 0 6px; }
.card-on { background: #00ffff; border-color: #00ffff; }
.th { display: block; width: 140px; height: 140px; background: #6c8fa8; }
.big { display: block; width: 210px; height: 210px; background: #6c8fa8; }
.t { font: 18px "Noto Sans CJK SC", sans-serif; fill: #26297c; }
.t2 { font: 15.800px "Noto Sans CJK SC", sans-serif; fill: #0c188c; }
.w { font: 15.500px "Liberation Serif", serif; fill: #fff; }
.w2 { font: 13px "Liberation Serif", serif; fill: #fff; }
.y { fill: none; stroke: #f4f420; stroke-width: 1.200; }
.p { fill: none; stroke: #b6c850; stroke-width: .9; }
.p2 { fill: none; stroke: #c4d0dc; stroke-width: .6; }
.gc { fill: none; stroke: #1e7048; stroke-width: 1; }
.d { fill: none; stroke: #111; stroke-width: 1; marker-start: url(#ar); marker-end: url(#ar); }
.k { fill: none; stroke: #111; stroke-width: 1; }

.side { width: 237px; margin-left: 17px; flex: none; }
.grid-box { margin: -6px 0 0 8px; width: 216px; height: 266px; border: 1px solid #a0a0a0; background: #fff; padding: 1px 0 0 1px; }
.props { border-collapse: collapse; table-layout: fixed; width: 211px; }
.props th, .props td { height: 19px; padding: 0 0 1px; border: 1px solid #b4b4b4; font-weight: normal; line-height: 16px; white-space: nowrap; overflow: hidden; }
.props thead th { height: 22px; background: linear-gradient(#fdfdfd, #e8e8e8); text-align: center; border-top: 0; border-left: 0; }
.c0 { width: 20px; }
.c1 { width: 91px; }
.props .val-h { background: linear-gradient(#f8dca0, #f0b65a); color: #7a0a3a; border-right: 1px solid #b4b4b4; }
.props tbody th { background: #f4f4f4; text-align: center; border-left: 0; font: 11px/16px "Liberation Mono", monospace; }
.m-c { font: 11px/16px "Liberation Mono", monospace; letter-spacing: -.6px; padding-left: 2px !important; }
.v { padding-left: 2px !important; font: 11px/16px "Liberation Sans", sans-serif; }
.act th { background: #fbd08a !important; }
.act .m-c { background: #0078d7; color: #fff; }
.cursor { border-right: 1px solid #111; padding-right: 1px; }
.preview { margin-top: 12px; height: 225px; border-top: 1px solid #dcdcdc; border-left: 1px solid #dcdcdc; border-bottom: 1px solid #dcdcdc; padding-left: 7px; }
.g-label-p { margin: -7px 0 3px -1px; }
.d-foot { display: flex; justify-content: flex-end; gap: 15px; padding: 11px 14px 0 0; }
.btn { width: 72px; height: 23px; background: #e1e1e1; border: 1px solid #adadad; text-align: center; line-height: 21px; color: #111; }

/* floating popup */
.popup { position: absolute; left: 1308px; top: 5px; width: 54px; box-shadow: 0 2px 5px rgba(0,0,0,.35); }
.pop-top { height: 25px; background: #fafafa; display: flex; align-items: center; padding-left: 4px; color: #999; font-size: 12.500px; justify-content: space-between; }
.pop-box { width: 19px; height: 18px; background: #ececec; margin-right: 1px; margin-top: -3px; }
.pop-btn { height: 22px; background: #f0f0f0; border: 1px solid #666; border-right-width: 2px; border-bottom-width: 2px; text-align: center; line-height: 21px; color: #111; }
```
